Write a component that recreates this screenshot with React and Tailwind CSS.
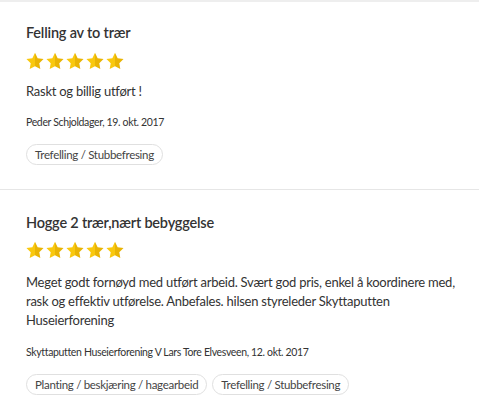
import React from "react";

const reviews = [
  {
    title: "Felling av to trær",
    text: "Raskt og billig utført !",
    author: "Peder Schjoldager, 19. okt. 2017",
    tags: ["Trefelling / Stubbefresing"],
  },
  {
    title: "Hogge 2 trær,nært bebyggelse",
    text: "Meget godt fornøyd med utført arbeid. Svært god pris, enkel å koordinere med, rask og effektiv utførelse. Anbefales. hilsen styreleder Skyttaputten Huseierforening",
    author: "Skyttaputten Huseierforening V Lars Tore Elvesveen, 12. okt. 2017",
    tags: ["Planting / beskjæring / hagearbeid", "Trefelling / Stubbefresing"],
  },
];

const Star = ({ id }) => (
  <svg width="18" height="18" viewBox="0 0 24 23">
    <defs>
      <linearGradient id={id} x1="0" y1="0" x2="1" y2="0">
        <stop offset="50%" stopColor="#f9c80e" />
        <stop offset="50%" stopColor="#e9b404" />
      </linearGradient>
    </defs>
    <path
      d="M12 0.6l3.5 7.2 7.9 1.1-5.7 5.5 1.4 7.8L12 18.5 4.9 22.2l1.4-7.8L0.6 8.9l7.9-1.1z"
      fill={`url(#${id})`}
    />
  </svg>
);

const Review = ({ r, idx, first }) => (
  <div className={first ? "pl-[26px] pr-[20px] pt-[21px] pb-[24px]" : "pl-[26px] pr-[20px] pt-[23px] pb-[24px]"}>
    <h3 className="text-[14.5px] font-semibold tracking-[-0.2px] text-[#333] leading-[20px]">{r.title}</h3>
    <div className={first ? "flex gap-[2px] mt-[9px]" : "flex gap-[2px] mt-[8px]"}>
      {[0, 1, 2, 3, 4].map((i) => (
        <Star key={i} id={`g${idx}-${i}`} />
      ))}
    </div>
    <p
      className={
        first
          ? "text-[13px] tracking-[-0.25px] text-[#333] leading-[18px] mt-[12px]"
          : "text-[13px] tracking-[-0.25px] text-[#333] leading-[19px] mt-[14px]"
      }
    >
      {r.text}
    </p>
    <p className="text-[10.5px] tracking-[-0.35px] text-[#333] leading-[14px] mt-[15px]">{r.author}</p>
    <div className="flex gap-[5px] mt-[15px]">
      {r.tags.map((t) => (
        <span
          key={t}
          className="border border-[#e0e0e0] rounded-full px-[8px] h-[21px] flex items-center text-[11.5px] tracking-[-0.3px] text-[#444]"
        >
          {t}
        </span>
      ))}
    </div>
  </div>
);

export default function App() {
  return (
    <div className="bg-white min-h-screen border-t-2 border-[#eeeeee] font-['Lato',sans-serif]">
      {reviews.map((r, i) => (
        <div key={i} className={i > 0 ? "border-t border-[#e6e6e6]" : ""}>
          <Review r={r} idx={i} first={i === 0} />
        </div>
      ))}
    </div>
  );
}
